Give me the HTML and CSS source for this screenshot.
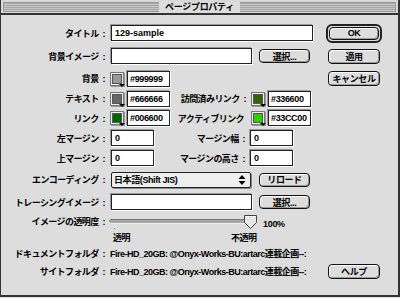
FILE: index.html
```html
<!DOCTYPE html>
<html lang="ja">
<head>
<meta charset="utf-8">
<title>ページプロパティ</title>
<link rel="stylesheet" href="styles.css">
</head>
<body>
<div class="window">
  <div class="titlebar"><span class="title">ページプロパティ</span></div>
  <div class="content">
    <div class="row r1">
      <span class="lbl">タイトル</span>
      <div class="field w-title">129-sample</div>
      <div class="side"><div class="defbtn"><div class="btn">OK</div></div></div>
    </div>
    <div class="row r2">
      <span class="lbl">背景イメージ</span>
      <div class="field w-long"></div>
      <div class="btn w-sel">選択...</div>
      <div class="side"><div class="btn w-side">適用</div></div>
    </div>
    <div class="row r3">
      <span class="lbl">背景</span>
      <div class="swatch"><i style="background:#999999"></i></div>
      <div class="field w-hex">#999999</div>
      <div class="side"><div class="btn w-side">キャンセル</div></div>
    </div>
    <div class="row r4">
      <span class="lbl">テキスト</span>
      <div class="swatch"><i style="background:#666666"></i></div>
      <div class="field w-hex">#666666</div>
      <span class="lbl2 l2a">訪問済みリンク</span>
      <div class="swatch sw2"><i style="background:#336600"></i></div>
      <div class="field w-hex">#336600</div>
    </div>
    <div class="row r5">
      <span class="lbl">リンク</span>
      <div class="swatch"><i style="background:#006600"></i></div>
      <div class="field w-hex">#006600</div>
      <span class="lbl2 l2a nocolon">アクティブリンク</span>
      <div class="swatch sw2"><i style="background:#33cc00"></i></div>
      <div class="field w-hex">#33CC00</div>
    </div>
    <div class="row r6">
      <span class="lbl">左マージン</span>
      <div class="field w-num">0</div>
      <span class="lbl2 l2b">マージン幅</span>
      <div class="field w-num n2">0</div>
    </div>
    <div class="row r7">
      <span class="lbl">上マージン</span>
      <div class="field w-num">0</div>
      <span class="lbl2 l2b">マージンの高さ</span>
      <div class="field w-num n2">0</div>
    </div>
    <div class="row r8">
      <span class="lbl">エンコーディング</span>
      <div class="popup"><span class="ptext">日本語(Shift JIS)</span>
        <svg class="parrow" width="8" height="10" viewBox="0 0 8 10"><path d="M4 0 L7.5 4 L0.5 4 Z M4 10 L7.5 6 L0.5 6 Z" fill="#000"/></svg>
      </div>
      <div class="btn w-sel bsel2">リロード</div>
    </div>
    <div class="row r9">
      <span class="lbl">トレーシングイメージ</span>
      <div class="field w-long"></div>
      <div class="btn w-sel">選択...</div>
    </div>
    <div class="row r10">
      <span class="lbl">イメージの透明度</span>
      <div class="slider">
        <div class="track"></div>
        <span class="tick"></span>
        <svg class="thumb" width="13" height="14" viewBox="0 0 13 14"><path d="M0.5 0.5 H12.5 V7.5 L6.5 13.5 L0.5 7.5 Z" fill="#e6e6e6" stroke="#444"/><path d="M1.5 1.5 H11.5" stroke="#fff"/></svg>
      </div>
      <span class="pct">100%</span>
    </div>
    <div class="row r11">
      <span class="cap c1">透明</span>
      <span class="cap c2">不透明</span>
    </div>
    <div class="row r12">
      <span class="lbl">ドキュメントフォルダ</span>
      <span class="path">Fire-HD_20GB: @Onyx-Works-BU:artarc連載企画--:</span>
    </div>
    <div class="row r13">
      <span class="lbl">サイトフォルダ</span>
      <span class="path">Fire-HD_20GB: @Onyx-Works-BU:artarc連載企画--:</span>
      <div class="side"><div class="btn w-side">ヘルプ</div></div>
    </div>
  </div>
</div>
</body>
</html>
```

FILE: styles.css
```css
* { box-sizing: border-box; }
html, body { margin: 0; padding: 0; background: #dddddd; }
body {
  width: 400px; height: 298px; overflow: hidden;
  font-family: "Liberation Sans", "Noto Sans CJK JP", sans-serif;
  font-weight: bold; font-size: 9px; color: #000;
}
.window {
  width: 400px; height: 297px;
  border-left: 1px solid #333;
  border-right: 2px solid #333;
  border-bottom: 2px solid #333;
  background: #dddddd;
  display: flex; flex-direction: column;
}
.titlebar {
  height: 15px;
  border-bottom: 2px solid #333;
  padding: 2px 2px 1px 2px;
  background-color: #d8d8d8;
  display: flex; justify-content: center; align-items: center;
  position: relative;
}
.titlebar::before {
  content: ""; position: absolute; left: 2px; right: 2px; top: 2px; bottom: 1px;
  background: repeating-linear-gradient(to bottom, #a8a8a8 0 1px, #c4c4c4 1px 2px);
  border: 1px solid #999;
}
.title {
  position: relative; z-index: 1;
  background: #dddddd; padding: 0 6px;
  font-size: 9px; line-height: 11px; letter-spacing: -0.3px;
}
.content { padding-top: 7px; display: flex; flex-direction: column; }
.row { display: flex; align-items: center; }
.r1 { height: 22px; }
.r2 { height: 24px; }
.r3 { height: 21px; }
.r4 { height: 19px; }
.r5 { height: 20px; }
.r6 { height: 20px; }
.r7 { height: 20px; }
.r8 { height: 23px; }
.r9 { height: 22px; }
.r10 { height: 17px; }
.r11 { height: 14px; }
.r12 { height: 18px; }
.r13 { height: 18px; }

.lbl {
  width: 104px; flex: none; text-align: right;
  letter-spacing: -0.6px; white-space: nowrap;
}
.lbl::after, .lbl2::after { content: ":"; margin-left: 4px; }
.lbl2.nocolon::after { content: ""; margin-left: 0; }
.lbl2 { flex: none; text-align: right; letter-spacing: -0.6px; white-space: nowrap; }
.l2a { width: 76px; }
.l2b { width: 91px; }
.nocolon { padding-right: 2px; }

.field {
  flex: none; height: 16px; background: #fff;
  border: 1px solid #222;
  box-shadow: -1px -1px 0 #999, 1px 1px 0 #fff;
  padding: 0 3px; line-height: 14px; white-space: nowrap; overflow: hidden;
}
.w-title { width: 202px; margin-left: 6px; }
.w-long { width: 141px; margin-left: 6px; }
.w-hex { width: 43px; margin-left: 3px; padding: 0 2px; letter-spacing: -0.35px; }
.w-num { width: 43px; margin-left: 6px; }
.n2 { margin-left: 5px; }

.swatch {
  flex: none; width: 14px; height: 14px; margin-left: 5px;
  border: 1px solid #777; background: #eee; padding: 1px;
  position: relative; box-shadow: 1px 1px 0 #999;
}
.swatch i { display: block; width: 100%; height: 100%; border: 1px solid #555; }
.swatch::after {
  content: ""; position: absolute; right: -2px; bottom: -2px;
  border-left: 3px solid transparent; border-right: 3px solid transparent;
  border-top: 3px solid #000;
}
.sw2 { margin-left: 5px; }

.btn {
  flex: none; height: 15px; border: 1px solid #111; border-radius: 4px;
  background: #dddddd;
  box-shadow: inset 1px 1px 0 #fff, inset -1px -1px 0 #999;
  display: flex; align-items: center; justify-content: center;
  letter-spacing: -0.4px; white-space: nowrap;
}
.w-sel { width: 51px; height: 14px; margin-left: 7px; }
.bsel2 { margin-left: 8px; }
.w-side { width: 52px; }
.side { margin-left: auto; width: 56px; padding-right: 16px; flex: none; box-sizing: content-box; display: flex; justify-content: center; }
.defbtn { border: 2px solid #222; border-radius: 6px; padding: 1px; width: 56px; }
.defbtn .btn { width: 100%; height: 13px; }

.popup {
  flex: none; width: 140px; height: 16px; margin-left: 6px;
  background: #eeeeee; border: 1px solid #222; border-radius: 2px;
  box-shadow: 1px 1px 0 #888;
  display: flex; align-items: center; padding-left: 2px; position: relative;
}
.ptext { letter-spacing: -0.4px; flex: 1; }
.parrow { margin-right: 4px; }

.slider { position: relative; width: 150px; height: 17px; margin-left: 4px; flex: none; }
.track {
  position: absolute; left: 0; top: 6px; width: 141px; height: 5px;
  background: #a8a8a8; border-radius: 3px;
  border-top: 1px solid #777; border-bottom: 1px solid #eee;
}
.tick { position: absolute; left: 5px; top: 15px; width: 1px; height: 1px; background: #888; }
.thumb { position: absolute; left: 135px; top: 2px; }
.pct { margin-left: 4px; margin-top: 5px; letter-spacing: -0.3px; }

.cap { letter-spacing: -0.5px; }
.c1 { margin-left: 112px; }
.c2 { margin-left: 101px; }

.path { margin-left: 5px; letter-spacing: -0.5px; white-space: nowrap; }
```
